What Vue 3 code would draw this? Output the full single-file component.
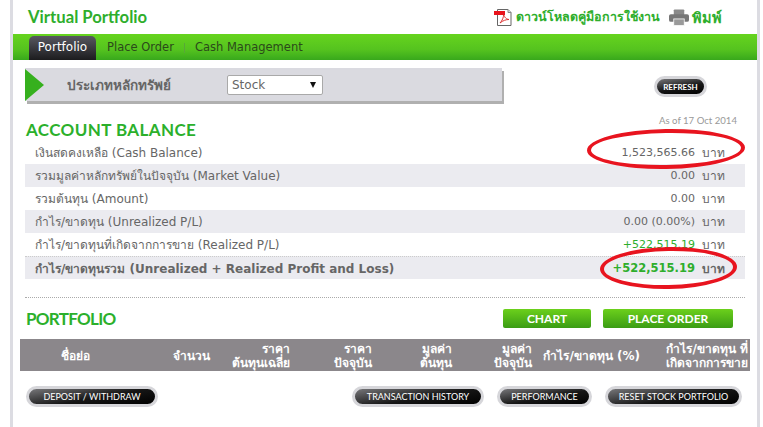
<template>
  <div class="page">
    <div class="frame">
      <header class="top">
        <h1 class="title">Virtual Portfolio</h1>
        <div class="top-links">
          <svg class="pdf-icon" width="18" height="17" viewBox="0 0 18 17">
            <path d="M3.500 .5H14L17 3.500V16.500H3.500Z" fill="#fff" stroke="#666"/>
            <path d="M14 .5V3.500H17" fill="#ddd" stroke="#888"/>
            <path d="M6 14C8 12 10 8 9.500 5C11 9 12 10 15 10.500C12 10.500 9 11.500 6 14Z" fill="none" stroke="#d33" stroke-width="1"/>
            <rect x="0" y="2" width="11" height="4" fill="#e8141c"/>
          </svg>
          <a class="link download">ดาวน์โหลดคู่มือการใช้งาน</a>
          <svg class="print-icon" width="20" height="17" viewBox="0 0 21 17">
            <rect x="5" y="0" width="11" height="6" rx="1" fill="#8a8a8a"/>
            <rect x="0" y="5" width="21" height="8" rx="2" fill="#777"/>
            <rect x="5" y="10" width="11" height="7" fill="#9a9a9a" stroke="#fff" stroke-width=".8"/>
          </svg>
          <a class="link print">พิมพ์</a>
        </div>
      </header>

      <nav class="nav">
        <a class="tab active">Portfolio</a>
        <a class="tab">Place Order</a>
        <span class="tab-sep"></span>
        <a class="tab">Cash Management</a>
      </nav>

      <section class="filter-row">
        <div class="filter">
          <span class="arrow"></span>
          <span class="filter-label">ประเภทหลักทรัพย์</span>
          <div class="select">
            <span>Stock</span>
            <span class="caret"></span>
          </div>
        </div>
        <button class="pill refresh">REFRESH</button>
      </section>

      <div class="balance-head">
        <h2 class="heading account">ACCOUNT BALANCE</h2>
        <span class="as-of">As of 17 Oct 2014</span>
      </div>

      <div class="rows">
        <div v-for="row in rows" :key="row.label" class="row" :class="{ total: row.total }">
          <span class="row-label">{{ row.label }}</span>
          <span class="row-value" :class="{ up: row.up }">{{ row.value }}</span>
          <span class="row-unit">บาท</span>
        </div>
        <span class="ring ring-cash"></span>
        <span class="ring ring-total"></span>
      </div>

      <div class="divider"></div>

      <div class="portfolio-head">
        <h2 class="heading portfolio">PORTFOLIO</h2>
        <div class="green-buttons">
          <button class="green chart">CHART</button>
          <button class="green order">PLACE ORDER</button>
        </div>
      </div>

      <div class="table-head">
        <div class="col c1">ชื่อย่อ</div>
        <div class="col c2">จำนวน</div>
        <div class="col c3">ราคา<br>ต้นทุนเฉลี่ย</div>
        <div class="col c4">ราคา<br>ปัจจุบัน</div>
        <div class="col c5">มูลค่า<br>ต้นทุน</div>
        <div class="col c6">มูลค่า<br>ปัจจุบัน</div>
        <div class="col c7">กำไร/ขาดทุน (%)</div>
        <div class="col c8">กำไร/ขาดทุน ที่<br>เกิดจากการขาย</div>
      </div>

      <div class="actions">
        <button class="pill deposit">DEPOSIT / WITHDRAW</button>
        <div class="actions-right">
          <button class="pill history">TRANSACTION HISTORY</button>
          <button class="pill perf">PERFORMANCE</button>
          <button class="pill reset">RESET STOCK PORTFOLIO</button>
        </div>
      </div>
    </div>
  </div>
</template>

<script setup>
const rows = [
  { label: 'เงินสดคงเหลือ (Cash Balance)', value: '1,523,565.66' },
  { label: 'รวมมูลค่าหลักทรัพย์ในปัจจุบัน (Market Value)', value: '0.00' },
  { label: 'รวมต้นทุน (Amount)', value: '0.00' },
  { label: 'กำไร/ขาดทุน (Unrealized P/L)', value: '0.00 (0.00%)' },
  { label: 'กำไร/ขาดทุนที่เกิดจากการขาย (Realized P/L)', value: '+522,515.19', up: true },
  { label: 'กำไร/ขาดทุนรวม (Unrealized + Realized Profit and Loss)', value: '+522,515.19', up: true, total: true }
]
</script>

<style>
html, body {
  margin: 0;
  background: #fff;
}
</style>

<style scoped>
.page {
  width: 763px;
  height: 427px;
  overflow: hidden;
  background: #fff;
  padding-left: 10px;
  box-sizing: border-box;
  font-family: "DejaVu Sans", "Noto Sans", sans-serif;
  color: #666;
}

.frame {
  width: 750px;
  height: 427px;
  box-sizing: border-box;
  border-left: 3px solid #dcdce2;
  border-right: 3px solid #dcdce2;
}

.top {
  height: 34px;
  display: flex;
  align-items: center;
  justify-content: space-between;
  padding: 0 35px 0 15px;
}

.title {
  margin: 0;
  font: 700 16.700px Lato, sans-serif;
  color: #2eae2c;
}

.top-links {
  display: flex;
  align-items: center;
}

.link {
  font-size: 12px;
  font-weight: 700;
  color: #2eae2c;
}

.download {
  margin: 0 9px 0 4px;
  font-size: 12.500px;
}

.print {
  font-size: 14.500px;
}

.print-icon {
  margin-right: 3px;
}

.nav {
  height: 26px;
  display: flex;
  align-items: flex-end;
  padding-left: 16px;
  background: linear-gradient(#66d41e, #55c31f 60%, #38a81c);
}

.tab {
  height: 24px;
  padding-right: 10px;
  font: 11.500px/23px "DejaVu Sans", sans-serif;
  color: #2b4a1a;
}

.tab.active {
  width: 67px;
  box-sizing: border-box;
  padding: 0;
  margin-right: 11px;
  text-align: center;
  color: #fff;
  font-size: 12px;
  border-radius: 5px 5px 0 0;
  background: linear-gradient(#585860, #1c1c1e);
}

.tab-sep {
  width: 1px;
  height: 10px;
  margin: 0 10px 7px 0;
  background: #58a838;
}

.filter-row {
  display: flex;
  align-items: flex-start;
  justify-content: space-between;
  padding: 8px 50px 0 12px;
  height: 55px;
  box-sizing: border-box;
}

.filter {
  width: 477px;
  height: 33px;
  display: flex;
  align-items: center;
  background: #dadae0;
  box-shadow: 2px 3px 0 #b0b0b0;
}

.arrow {
  width: 0;
  height: 0;
  border-left: 19px solid #36b01e;
  border-top: 16.500px solid transparent;
  border-bottom: 16.500px solid transparent;
}

.filter-label {
  margin-left: 23px;
  width: 160px;
  font-size: 13.500px;
  font-weight: 700;
  color: #666;
}

.select {
  width: 96px;
  height: 20px;
  box-sizing: border-box;
  display: flex;
  align-items: center;
  justify-content: space-between;
  padding: 0 6px 0 4px;
  background: #fff;
  border: 1px solid #a9a9a9;
  border-radius: 2px;
  font-size: 12px;
  color: #666;
}

.caret {
  width: 0;
  height: 0;
  border-left: 3.500px solid transparent;
  border-right: 3.500px solid transparent;
  border-top: 6px solid #111;
}

.pill {
  height: 21px;
  box-sizing: border-box;
  padding: 0;
  border: 3px solid #d6d6da;
  border-radius: 11px;
  background: linear-gradient(170deg, #77777a, #161616 55%, #000);
  color: #fff;
  font: 400 9px Lato, sans-serif;
  white-space: nowrap;
}

.refresh {
  width: 53px;
  margin-top: 8px;
  font-size: 8px;
  font-weight: 700;
}

.balance-head {
  height: 26px;
  display: flex;
  align-items: flex-start;
  justify-content: space-between;
  padding: 0 20px 0 13px;
}

.heading {
  margin: 0;
  font: 700 17px/20px Lato, sans-serif;
  color: #2bb02b;
}

.heading.account {
  margin-top: 5px;
  letter-spacing: .4px;
}

.heading.portfolio {
  letter-spacing: -.7px;
}

.as-of {
  font: 9.600px/12px Lato, sans-serif;
  color: #999;
}

.rows {
  position: relative;
  margin-left: 12px;
  width: 720px;
}

.row {
  height: 23px;
  box-sizing: border-box;
  display: flex;
  align-items: center;
  padding-left: 10px;
  font-size: 12px;
}

.row:nth-child(even) {
  background: #ebebf0;
}

.row-label {
  flex: 1;
}

.row-value {
  font-size: 11px;
}

.row-value.up {
  color: #2eae2c;
}

.row-unit {
  width: 43px;
  margin-left: 7px;
}

.row.total {
  font-weight: 700;
  border-top: 1px dotted #ccc;
}

.row.total .row-value {
  font-size: 11.500px;
}

.ring {
  position: absolute;
  box-sizing: border-box;
  border: 4.500px solid #e8141f;
  border-radius: 50%;
  transform: rotate(-1deg);
}

.ring-cash {
  left: 562px;
  top: -12px;
  width: 158px;
  height: 40px;
}

.ring-total {
  left: 575px;
  top: 106px;
  width: 137px;
  height: 42px;
}

.divider {
  margin: 18px 0 0 12px;
  width: 720px;
  border-top: 1px dotted #aaa;
}

.portfolio-head {
  height: 41px;
  display: flex;
  justify-content: space-between;
  padding: 11px 24px 0 13px;
  box-sizing: border-box;
}

.green-buttons {
  display: flex;
  gap: 12px;
}

.green {
  height: 19px;
  padding: 0;
  border: none;
  border-radius: 2px;
  background: linear-gradient(#6cd01c, #3a9c14);
  color: #fff;
  font: 700 12px Lato, sans-serif;
}

.chart {
  width: 88px;
}

.order {
  width: 130px;
}

.table-head {
  margin-left: 7px;
  width: 730px;
  height: 32px;
  box-sizing: border-box;
  padding-top: 2px;
  display: flex;
  align-items: center;
  background: #8b878b;
  color: #fff;
  font-size: 12px;
  font-weight: 700;
  line-height: 14px;
  text-align: right;
}

.col {
  flex: none;
  white-space: nowrap;
}

.c1 {
  width: 110px;
  text-align: center;
}

.c2,
.c3,
.c5,
.c6 {
  width: 80px;
}

.c4 {
  width: 82px;
}

.c7 {
  width: 108px;
}

.c8 {
  width: 108px;
}

.actions {
  display: flex;
  justify-content: space-between;
  padding: 15px 15px 0 13px;
}

.actions-right {
  display: flex;
  gap: 13px;
}

.deposit {
  width: 132px;
}

.history {
  width: 132px;
}

.perf {
  width: 95px;
}

.reset {
  width: 137px;
}
</style>
